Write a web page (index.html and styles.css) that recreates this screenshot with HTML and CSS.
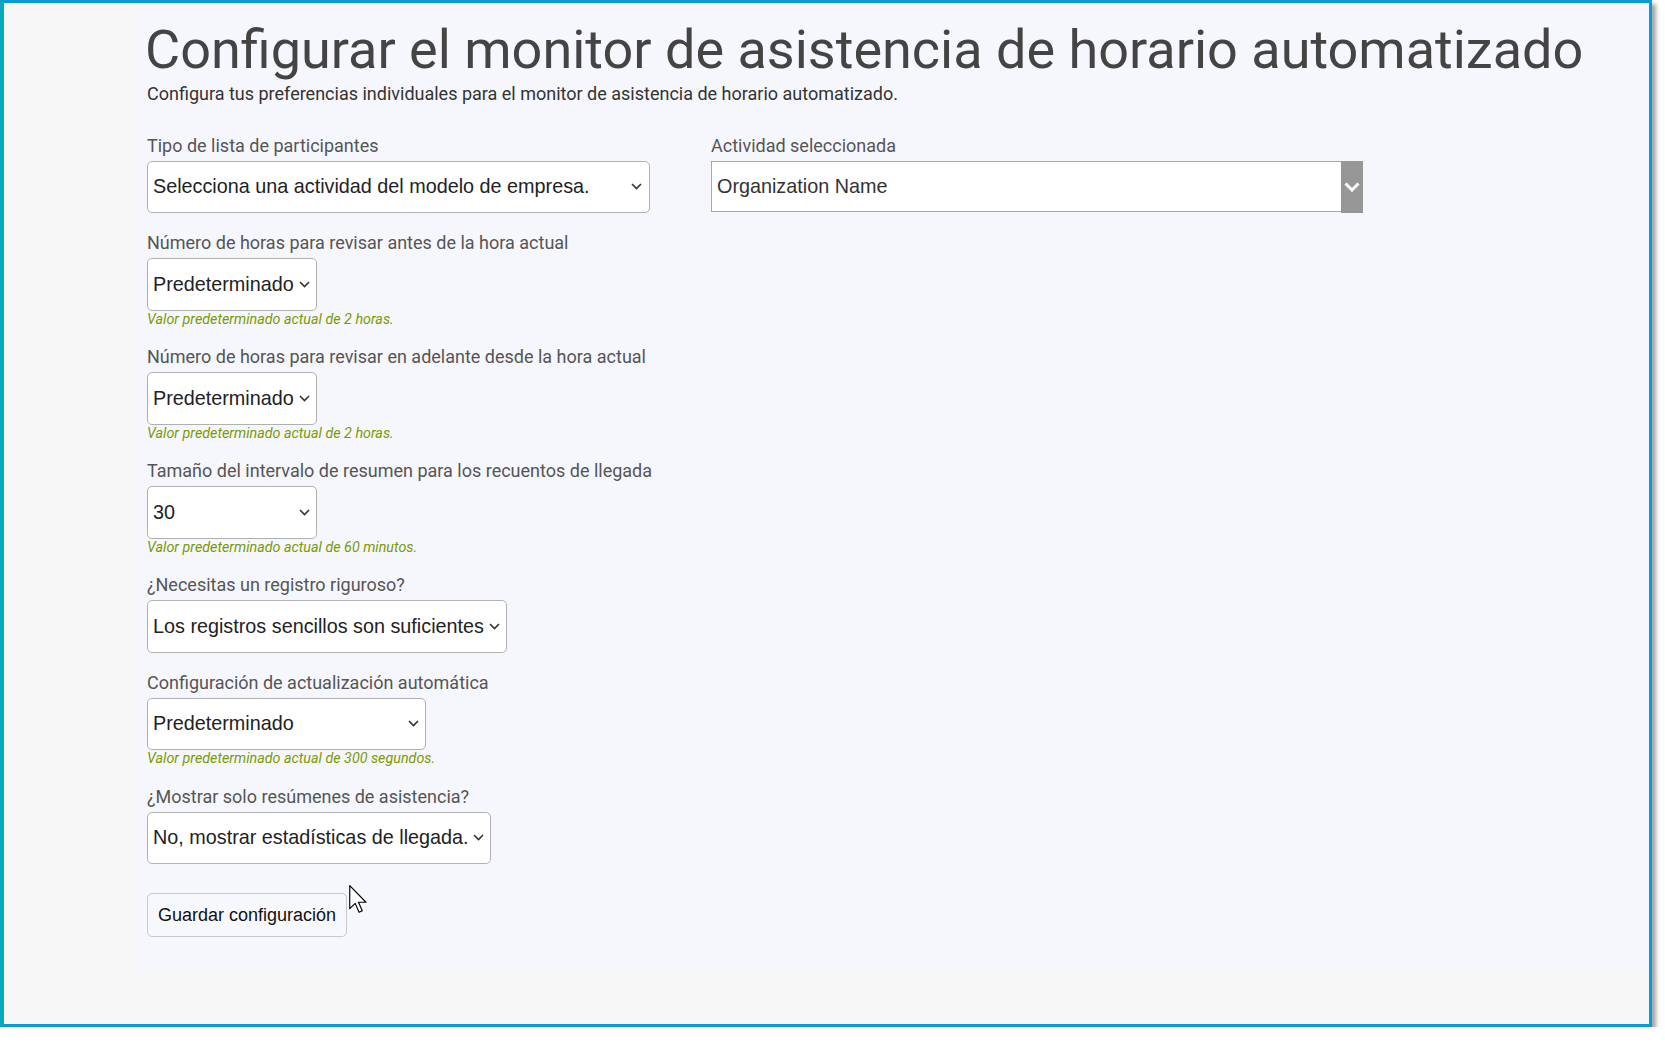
FILE: index.html
```html
<!DOCTYPE html>
<html lang="es">
<head>
<meta charset="utf-8">
<title>Configurar el monitor de asistencia de horario automatizado</title>
<link rel="stylesheet" href="styles.css">
</head>
<body>
<div class="frame">
  <main class="panel">
    <h1 class="title">Configurar el monitor de asistencia de horario automatizado</h1>
    <p class="subtitle">Configura tus preferencias individuales para el monitor de asistencia de horario automatizado.</p>
    <form class="form">
      <div class="col">
        <div class="group">
          <label class="label">Tipo de lista de participantes</label>
          <div class="select select--roster"><span>Selecciona una actividad del modelo de empresa.</span><svg class="chev" width="11" height="7" viewBox="0 0 11 7"><path d="M1 1 L5.5 5.5 L10 1" fill="none" stroke="#333" stroke-width="1.6"/></svg></div>
        </div>
        <div class="group">
          <label class="label">Número de horas para revisar antes de la hora actual</label>
          <div class="select select--small"><span>Predeterminado</span><svg class="chev" width="11" height="7" viewBox="0 0 11 7"><path d="M1 1 L5.5 5.5 L10 1" fill="none" stroke="#333" stroke-width="1.6"/></svg></div>
          <p class="hint">Valor predeterminado actual de 2 horas.</p>
        </div>
        <div class="group">
          <label class="label">Número de horas para revisar en adelante desde la hora actual</label>
          <div class="select select--small"><span>Predeterminado</span><svg class="chev" width="11" height="7" viewBox="0 0 11 7"><path d="M1 1 L5.5 5.5 L10 1" fill="none" stroke="#333" stroke-width="1.6"/></svg></div>
          <p class="hint">Valor predeterminado actual de 2 horas.</p>
        </div>
        <div class="group">
          <label class="label">Tamaño del intervalo de resumen para los recuentos de llegada</label>
          <div class="select select--small"><span>30</span><svg class="chev" width="11" height="7" viewBox="0 0 11 7"><path d="M1 1 L5.5 5.5 L10 1" fill="none" stroke="#333" stroke-width="1.6"/></svg></div>
          <p class="hint">Valor predeterminado actual de 60 minutos.</p>
        </div>
        <div class="group">
          <label class="label">¿Necesitas un registro riguroso?</label>
          <div class="select select--log"><span>Los registros sencillos son suficientes</span><svg class="chev" width="11" height="7" viewBox="0 0 11 7"><path d="M1 1 L5.5 5.5 L10 1" fill="none" stroke="#333" stroke-width="1.6"/></svg></div>
        </div>
        <div class="group">
          <label class="label">Configuración de actualización automática</label>
          <div class="select select--refresh"><span>Predeterminado</span><svg class="chev" width="11" height="7" viewBox="0 0 11 7"><path d="M1 1 L5.5 5.5 L10 1" fill="none" stroke="#333" stroke-width="1.6"/></svg></div>
          <p class="hint">Valor predeterminado actual de 300 segundos.</p>
        </div>
        <div class="group">
          <label class="label">¿Mostrar solo resúmenes de asistencia?</label>
          <div class="select select--summary"><span>No, mostrar estadísticas de llegada.</span><svg class="chev" width="11" height="7" viewBox="0 0 11 7"><path d="M1 1 L5.5 5.5 L10 1" fill="none" stroke="#333" stroke-width="1.6"/></svg></div>
        </div>
        <div class="actions">
          <button type="button" class="btn">Guardar configuración</button>
          <svg class="cursor" width="18" height="28" viewBox="0 0 12.5 19.5"><path d="M0.5 0.5 L0.5 16.5 L4.3 12.8 L7 19 L9.2 18 L6.6 12 L11.8 12 Z" fill="#fff" stroke="#000" stroke-width="0.8" stroke-linejoin="round"/></svg>
        </div>
      </div>
      <div class="col">
        <div class="group">
          <label class="label">Actividad seleccionada</label>
          <div class="combo">
            <div class="combo-field">Organization Name</div>
            <div class="combo-btn"><svg width="16" height="10" viewBox="0 0 16 10"><path d="M1.5 1.5 L8 8 L14.5 1.5" fill="none" stroke="#fff" stroke-width="3"/></svg></div>
          </div>
        </div>
      </div>
    </form>
  </main>
</div>
</body>
</html>
```
FILE: styles.css
```css
* { box-sizing: border-box; }

html, body {
  margin: 0;
  padding: 0;
  background: #ffffff;
}

.frame {
  width: 1652px;
  height: 1027px;
  border-top: 3px solid #0a9bd6;
  border-right: 3px solid #0a9bd6;
  border-bottom: 3px solid #0a9bd6;
  border-left: 4px solid #0aa9bc;
  background: #f7f7f7;
  box-shadow: 4px 4px 4px rgba(0, 0, 0, 0.35);
  padding-left: 134px;
}

.panel {
  background: #f6f7fc;
  padding: 15px 0 33px 9px;
  font-family: Roboto, "Liberation Sans", sans-serif;
}

.title {
  margin: 0 0 0 -2px;
  font-size: 54px;
  line-height: 64px;
  font-weight: 400;
  color: #444444;
  white-space: nowrap;
}

.subtitle {
  margin: 0;
  font-size: 18px;
  line-height: 24px;
  color: #333333;
}

.form {
  margin-top: 27.5px;
  display: grid;
  grid-template-columns: 564px 652px;
}

.col {
  display: flex;
  flex-direction: column;
  align-items: flex-start;
}

.group {
  display: flex;
  flex-direction: column;
  align-items: flex-start;
  margin-bottom: 18px;
}

.label {
  display: block;
  font-size: 18px;
  line-height: 24.5px;
  color: #555555;
  margin-bottom: 2.5px;
}

.select {
  display: flex;
  align-items: center;
  justify-content: space-between;
  height: 52.5px;
  padding: 0 6px 0 5px;
  background: #ffffff;
  border: 1px solid #b1b1b3;
  border-radius: 5px;
  font-family: "Liberation Sans", Arial, sans-serif;
  font-size: 19.8px;
  color: #222222;
  white-space: nowrap;
}

.chev { flex: none; }

.select--roster { width: 503px; padding-right: 7px; }
.select--small { width: 170px; }
.select--log { width: 360px; }
.select--refresh { width: 279px; }
.select--summary { width: 344px; }

.hint {
  margin: 0;
  font-size: 14.3px;
  line-height: 16.5px;
  font-style: italic;
  color: #7a9a01;
}

.actions {
  position: relative;
  margin-top: 11px;
}

.btn {
  display: block;
  height: 44px;
  padding: 0 10px;
  background: #f7f8fb;
  border: 1px solid #c9c9cc;
  border-radius: 5px;
  font-family: "Liberation Sans", Arial, sans-serif;
  font-size: 18px;
  color: #111111;
}

.cursor {
  position: absolute;
  left: 202px;
  top: -8px;
}

.combo {
  display: flex;
  width: 652px;
  align-items: flex-start;
}

.combo-field {
  flex: 1;
  height: 51px;
  display: flex;
  align-items: center;
  padding-left: 5px;
  background: #ffffff;
  border: 1px solid #a9a9ac;
  border-right: none;
  font-family: "Liberation Sans", Arial, sans-serif;
  font-size: 19.8px;
  color: #333333;
}

.combo-btn {
  width: 22px;
  height: 52px;
  background: #979797;
  display: flex;
  align-items: center;
  justify-content: center;
}
```
